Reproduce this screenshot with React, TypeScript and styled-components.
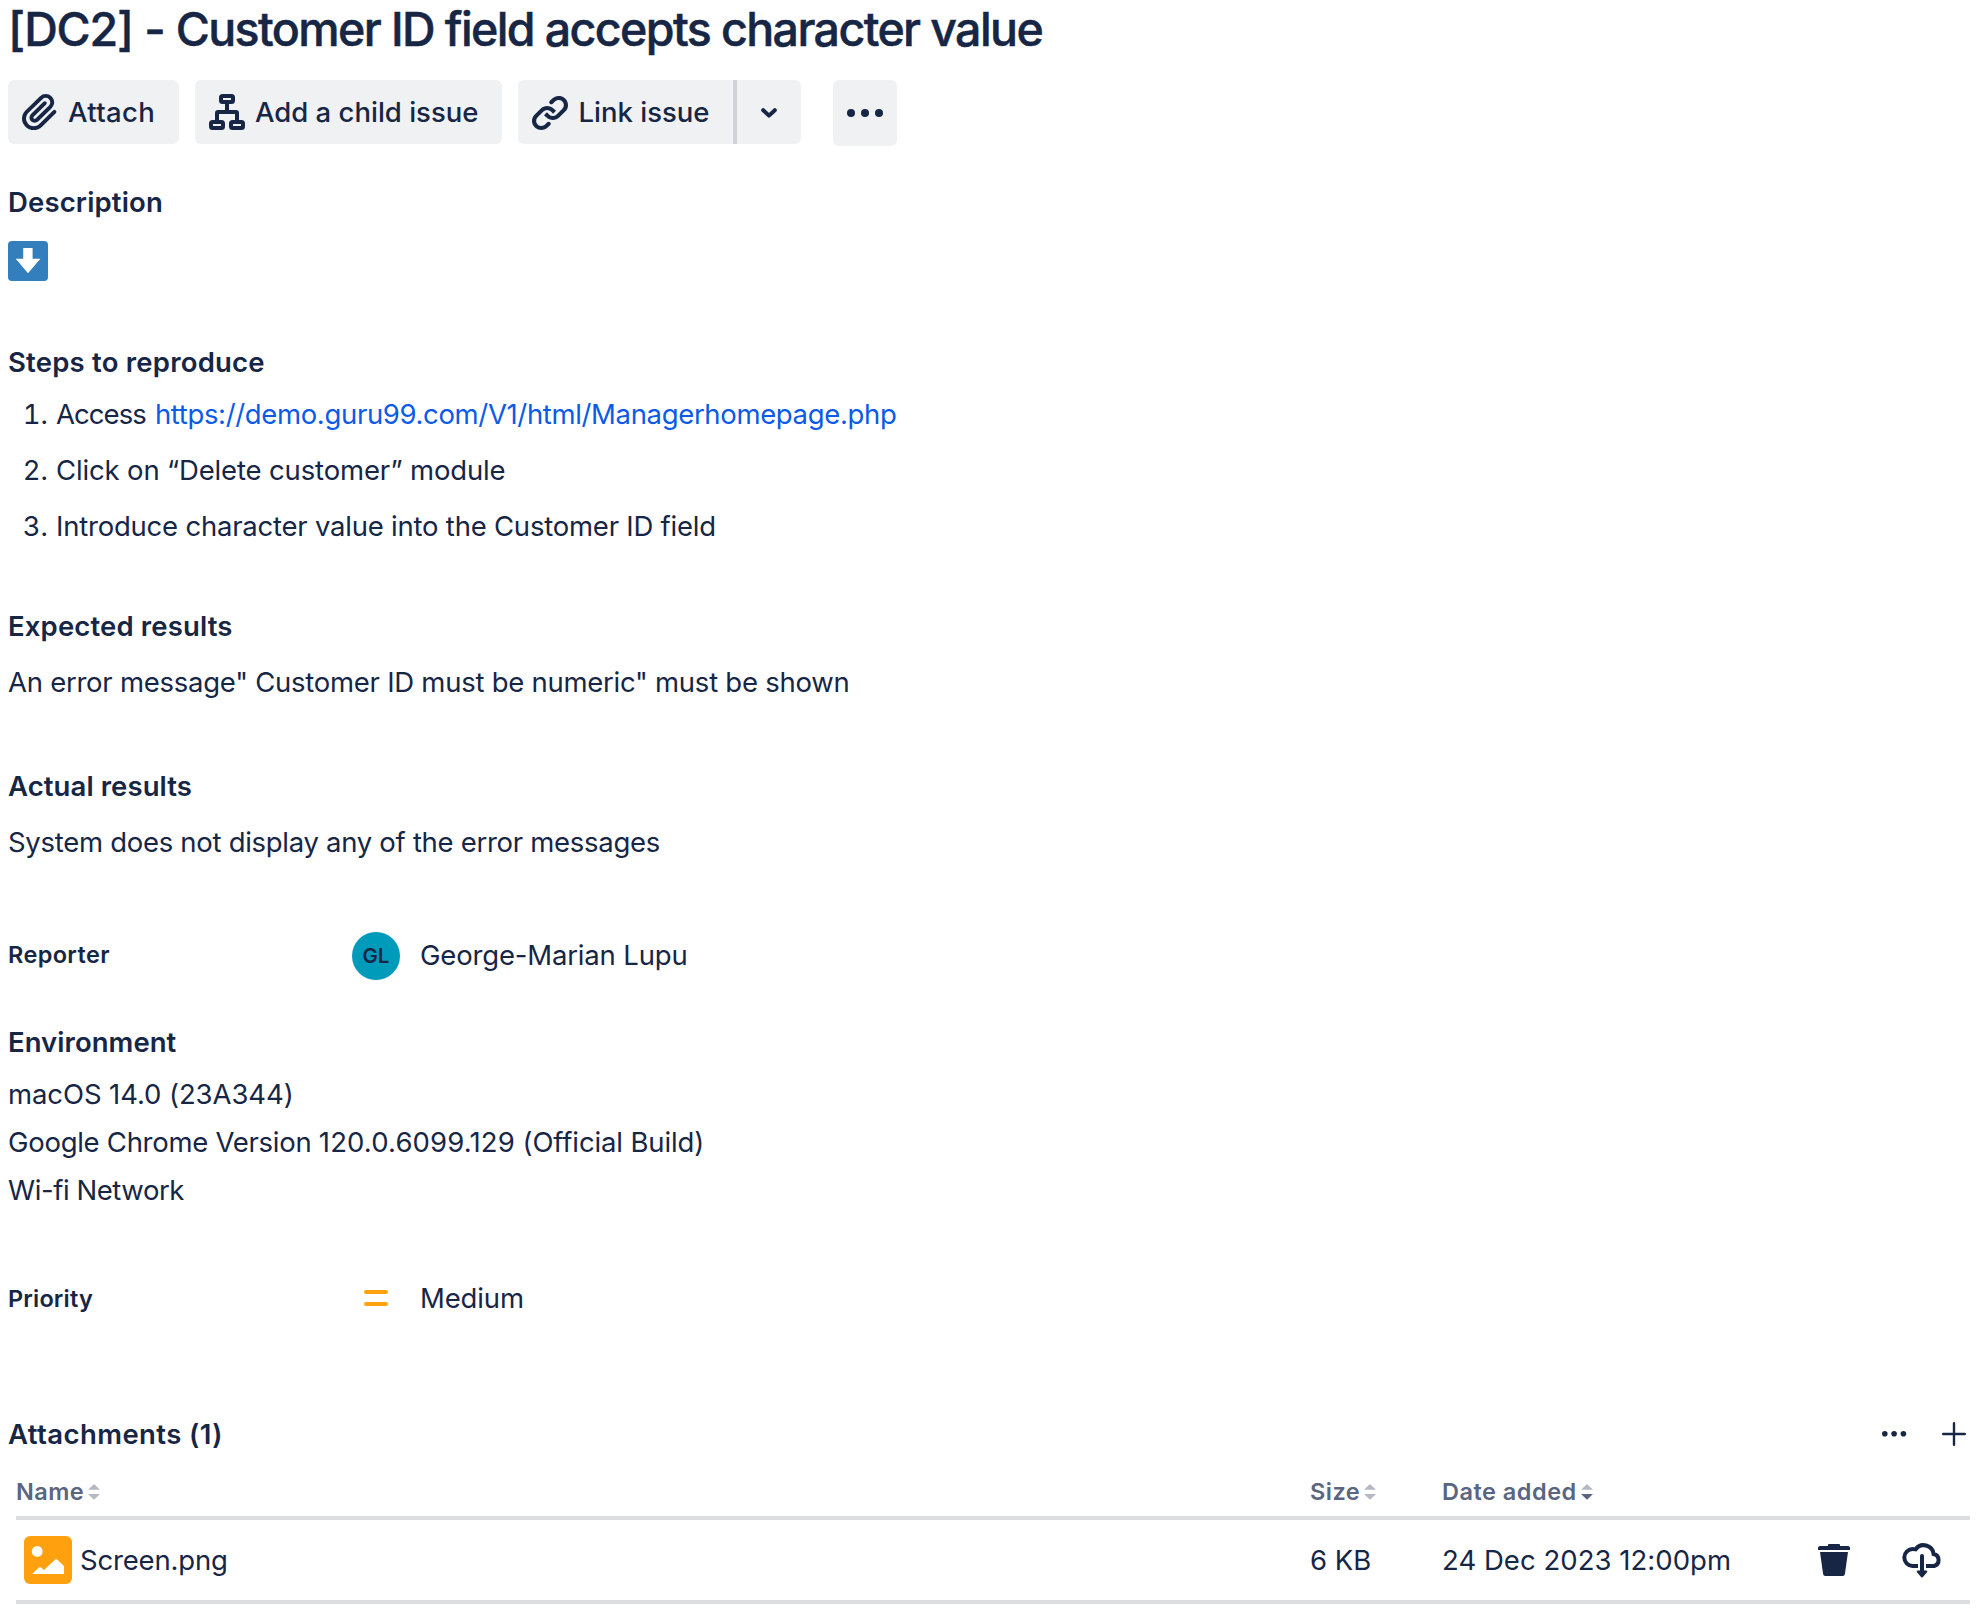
import React from 'react';
import styled, { createGlobalStyle } from 'styled-components';

const color = {
  text: '#172645',
  subtle: '#5a6580',
  link: '#0c5ae8',
  button: '#f0f1f3',
  divider: '#d0d1d9',
  rule: '#dddee3',
  orange: '#ffa00f',
  faint: '#b4b9c4',
};

const GlobalStyle = createGlobalStyle`
  *, *::before, *::after { box-sizing: border-box; }
  body {
    margin: 0;
    background: #fff;
    color: ${color.text};
    font-family: Inter, 'Liberation Sans', sans-serif;
    font-size: 27.5px;
    line-height: 40px;
  }
  svg { display: block; flex: none; overflow: visible; }
`;

interface Spaced {
  $ls?: number;
}

const Page = styled.main`
  display: flex;
  flex-direction: column;
  width: 1988px;
  height: 1616px;
  padding: 1px 18px 0 8px;
  overflow: hidden;
  white-space: nowrap;
`;

const Title = styled.h1`
  margin: 0;
  font-size: 46.5px;
  line-height: 56px;
  font-weight: 500;
  -webkit-text-stroke: 0.5px currentColor;
`;

const Toolbar = styled.div`
  display: flex;
  align-items: flex-start;
  gap: 16px;
  margin-top: 23px;
  height: 66px;
`;

const Button = styled.button<{ $width: number; $gap?: number; $joined?: boolean } & Spaced>`
  display: flex;
  align-items: center;
  gap: ${(p) => p.$gap ?? 4}px;
  width: ${(p) => p.$width}px;
  height: 64px;
  padding: 0 0 0 8px;
  border: 0;
  border-radius: ${(p) => (p.$joined ? '6px 0 0 6px' : '6px')};
  background: ${color.button};
  color: inherit;
  font: inherit;
  font-weight: 500;
  letter-spacing: ${(p) => p.$ls ?? 0}px;
`;

const SplitButton = styled.div`
  display: flex;
`;

const Caret = styled.button`
  display: flex;
  align-items: center;
  justify-content: center;
  width: 68px;
  height: 64px;
  padding: 2px 0 0;
  border: 0;
  border-left: 4px solid ${color.divider};
  border-radius: 0 6px 6px 0;
  background: ${color.button};
  color: inherit;
`;

const MoreButton = styled.button`
  display: flex;
  align-items: center;
  justify-content: center;
  width: 64px;
  height: 66px;
  margin-left: 16px;
  padding: 0;
  border: 0;
  border-radius: 6px;
  background: ${color.button};
  color: inherit;
`;

const Section = styled.section<{ $top: number }>`
  display: flex;
  flex-direction: column;
  margin-top: ${(p) => p.$top}px;
`;

const Heading = styled.h2<Spaced>`
  margin: 0;
  font-size: 27.5px;
  line-height: 40px;
  font-weight: 600;
  letter-spacing: ${(p) => p.$ls ?? 0}px;
`;

const EmojiRow = styled.div`
  margin-top: 19px;
`;

const Steps = styled.ol`
  display: flex;
  flex-direction: column;
  gap: 16px;
  margin: 12px 0 0;
  padding: 0;
  list-style: none;
`;

const Step = styled.li`
  display: flex;
  gap: 8px;
`;

const Marker = styled.span`
  width: 40px;
  text-align: right;
  font-variant-numeric: tabular-nums;
`;

const Text = styled.span<Spaced>`
  letter-spacing: ${(p) => p.$ls ?? 0}px;
`;

const Link = styled.a`
  margin-left: 9px;
  color: ${color.link};
  text-decoration: none;
  letter-spacing: -0.346px;
`;

const Paragraph = styled.p<Spaced>`
  margin: 16px 0 0;
  letter-spacing: ${(p) => p.$ls ?? 0}px;
`;

const Lines = styled.div`
  display: flex;
  flex-direction: column;
  margin-top: 8px;
  line-height: 48px;
`;

const FieldRow = styled.div<{ $top: number }>`
  display: grid;
  grid-template-columns: 344px 68px auto;
  align-items: center;
  height: 48px;
  margin-top: ${(p) => p.$top}px;
`;

const FieldLabel = styled.span<{ $lift?: number } & Spaced>`
  padding-bottom: ${(p) => p.$lift ?? 0}px;
  font-size: 23.5px;
  line-height: 33px;
  font-weight: 600;
  letter-spacing: ${(p) => p.$ls ?? 0}px;
`;

const FieldValue = styled.span<{ $lift?: number } & Spaced>`
  padding-bottom: ${(p) => p.$lift ?? 0}px;
  letter-spacing: ${(p) => p.$ls ?? 0}px;
`;

const Avatar = styled.span`
  display: flex;
  align-items: center;
  justify-content: center;
  width: 48px;
  height: 48px;
  border-radius: 50%;
  background: #009abb;
  font-size: 20.5px;
  line-height: 24px;
  font-weight: 600;
`;

const PriorityIcon = styled.span`
  display: flex;
  flex-direction: column;
  justify-content: space-between;
  width: 24px;
  height: 16px;
  margin-left: 12px;

  &::before,
  &::after {
    content: '';
    height: 4px;
    border-radius: 2px;
    background: ${color.orange};
  }
`;

const AttachmentsBar = styled.div`
  display: flex;
  align-items: center;
  justify-content: space-between;
  height: 40px;
`;

const BarActions = styled.div`
  display: flex;
  align-items: center;
  gap: 36px;
  margin-right: 4px;
`;

const TableRow = styled.div<{ $height: number; $head?: boolean }>`
  display: grid;
  grid-template-columns: 1294px 132px 376px 84px auto;
  align-items: center;
  height: ${(p) => p.$height}px;
  margin-left: 8px;
  padding-top: ${(p) => (p.$head ? 14 : 0)}px;
  border-bottom: 4px solid ${color.rule};
`;

const ColumnHead = styled.div<Spaced>`
  display: flex;
  align-items: center;
  gap: 4px;
  color: ${color.subtle};
  font-size: 23.5px;
  line-height: 32px;
  font-weight: 600;
  letter-spacing: ${(p) => p.$ls ?? 0}px;
`;

const FileCell = styled.div`
  display: flex;
  align-items: center;
  gap: 8px;
  padding-left: 8px;
`;

const AttachIcon = () => (
  <svg width="48" height="48" viewBox="0 0 24 24" fill="currentColor">
    <path d="M11.643 17.965c-1.53 1.495-4.016 1.496-5.542.004a3.773 3.773 0 01.002-5.412l7.147-6.985a2.316 2.316 0 013.233-.003c.893.873.895 2.282.004 3.153l-6.703 6.55a.653.653 0 01-.914-.008.62.62 0 010-.902l6.229-6.087a.941.941 0 000-1.353.995.995 0 00-1.384 0l-6.23 6.087a2.502 2.502 0 00.001 3.607 2.643 2.643 0 003.683.009l6.703-6.55a4.074 4.074 0 00-.003-5.859 4.306 4.306 0 00-6.002.003l-7.148 6.985a5.655 5.655 0 00-.001 8.118c2.29 2.237 6.015 2.238 8.308-.004l6.862-6.705a.941.941 0 000-1.353.995.995 0 00-1.384 0l-6.861 6.705z" />
  </svg>
);

const ChildIssuesIcon = () => (
  <svg width="48" height="48" viewBox="0 0 48 48" fill="none" stroke="currentColor" strokeWidth="4">
    <rect x="18" y="8" width="12" height="6" rx="1.5" />
    <path d="M24 15v9M14 33v-8a1 1 0 011-1h18a1 1 0 011 1v8" />
    <rect x="8" y="34" width="12" height="6" rx="1.5" />
    <rect x="28" y="34" width="12" height="6" rx="1.5" />
  </svg>
);

const LinkIcon = () => (
  <svg width="48" height="48" viewBox="0 0 24 24" fill="currentColor">
    <path d="M12.856 5.457l-.937.92a1.002 1.002 0 000 1.437 1.047 1.047 0 001.463 0l.984-.966c.967-.95 2.542-1.135 3.602-.288a2.54 2.54 0 01.203 3.81l-2.903 2.852a2.646 2.646 0 01-3.696 0l-1.11-1.09L9 13.57l1.108 1.089c1.822 1.788 4.802 1.788 6.622 0l2.905-2.852a4.558 4.558 0 00-.357-6.82c-1.893-1.517-4.695-1.226-6.422.47" />
    <path d="M11.144 19.543l.937-.92a1.002 1.002 0 000-1.437 1.047 1.047 0 00-1.462 0l-.985.966c-.967.95-2.542 1.135-3.602.288a2.54 2.54 0 01-.203-3.81l2.903-2.852a2.646 2.646 0 013.696 0l1.11 1.09L15 11.43l-1.108-1.089c-1.822-1.788-4.802-1.788-6.622 0l-2.905 2.852a4.558 4.558 0 00.357 6.82c1.893 1.517 4.695 1.226 6.422-.47" />
  </svg>
);

const ChevronIcon = () => (
  <svg width="16" height="10" viewBox="0 0 16 10" fill="none" stroke="currentColor" strokeWidth="4" strokeLinecap="round" strokeLinejoin="round">
    <path d="M2.2 2.2L8 7.6l5.8-5.4" />
  </svg>
);

const DotsIcon = ({ r, step }: { r: number; step: number }) => {
  const width = step * 2 + r * 2;
  return (
    <svg width={width} height={r * 2} fill="currentColor">
      {[0, 1, 2].map((i) => (
        <circle key={i} cx={r + i * step} cy={r} r={r} />
      ))}
    </svg>
  );
};

const PlusIcon = () => (
  <svg width="24" height="24" viewBox="0 0 24 24" fill="none" stroke="currentColor" strokeWidth="2.4" strokeLinecap="round">
    <path d="M12 1.2v21.6M1.2 12h21.6" />
  </svg>
);

const DownArrowEmoji = () => (
  <svg width="40" height="40" viewBox="0 0 40 40">
    <rect width="40" height="40" rx="4" fill="#337fbd" />
    <path d="M15.2 7h9.4v10.8h7.8L20 32.3 7.7 17.8h7.5z" fill="#fff" />
  </svg>
);

const SortIcon = ({ sorted }: { sorted?: boolean }) => (
  <svg width="12" height="18" viewBox="0 0 12 18">
    <path d="M0 6.7L6 1l6 5.7z" fill={color.faint} />
    <path d="M0 11l6 5.700L12 11z" fill={sorted ? color.subtle : color.faint} />
  </svg>
);

const ImageFileIcon = () => (
  <svg width="48" height="48" viewBox="0 0 48 48">
    <rect width="48" height="48" rx="6" fill={color.orange} />
    <circle cx="13.2" cy="15.4" r="5.4" fill="#fff" />
    <path d="M8 38l7-6.6q1-.9 2 0l3 2.6 11-10.3q1.2-1.2 2.4 0L40 30v8z" fill="#fff" />
  </svg>
);

const TrashIcon = () => (
  <svg width="32" height="32" viewBox="0 0 32 32" fill="currentColor">
    <path d="M11 0h10q1 0 1 1v1h8q2 0 2 2v2H0V4q0-2 2-2h8V1q0-1 1-1zM2 8h28l-3.1 22q-.3 2-2.1 2H7.2q-1.8 0-2.1-2z" />
  </svg>
);

const CloudDownloadIcon = () => (
  <svg width="40" height="36" viewBox="0 0 40 36" fill="none" stroke="currentColor" strokeWidth="4">
    <path d="M16 24h-5.4A8.5 8.5 0 0111 7q1.4 0 2.6.3A10 10 0 0131.6 12 6.2 6.2 0 0132.2 24H24" />
    <path d="M20 14v16" strokeLinecap="round" />
    <path d="M15.5 28.5h9q1.3.6.5 1.7l-4 4.9q-1 1-2 0l-4-4.9q-.8-1.1.5-1.7z" fill="currentColor" stroke="none" />
  </svg>
);

export default function App() {
  return (
    <>
      <GlobalStyle />
      <Page>
        <Title>
          <Text $ls={-1.18}>[DC2] - </Text>
          <Text $ls={-1.6}>Customer ID field accepts character value</Text>
        </Title>

        <Toolbar>
          <Button $width={171} $ls={0.36}>
            <AttachIcon />
            Attach
          </Button>
          <Button $width={307}>
            <ChildIssuesIcon />
            Add a child issue
          </Button>
          <SplitButton>
            <Button $width={215} $gap={4.5} $joined>
              <LinkIcon />
              Link issue
            </Button>
            <Caret>
              <ChevronIcon />
            </Caret>
          </SplitButton>
          <MoreButton>
            <DotsIcon r={4} step={14} />
          </MoreButton>
        </Toolbar>

        <Section $top={36}>
          <Heading $ls={0.15}>Description</Heading>
          <EmojiRow>
            <DownArrowEmoji />
          </EmojiRow>
        </Section>

        <Section $top={61}>
          <Heading $ls={0.21}>Steps to reproduce</Heading>
          <Steps>
            <Step>
              <Marker>1.</Marker>
              <div>
                <Text $ls={-0.93}>Access</Text>
                <Link>https://demo.guru99.com/V1/html/Managerhomepage.php</Link>
              </div>
            </Step>
            <Step>
              <Marker>2.</Marker>
              <Text $ls={-0.15}>Click on “Delete customer” module</Text>
            </Step>
            <Step>
              <Marker>3.</Marker>
              <Text $ls={-0.22}>Introduce character value into the Customer ID field</Text>
            </Step>
          </Steps>
        </Section>

        <Section $top={60}>
          <Heading $ls={0.15}>Expected results</Heading>
          <Paragraph $ls={-0.26}>An error message" Customer ID must be numeric" must be shown</Paragraph>
        </Section>

        <Section $top={64}>
          <Heading $ls={0.09}>Actual results</Heading>
          <Paragraph $ls={-0.29}>System does not display any of the error messages</Paragraph>
        </Section>

        <FieldRow $top={70}>
          <FieldLabel $ls={0.36} $lift={3}>Reporter</FieldLabel>
          <Avatar>GL</Avatar>
          <FieldValue $ls={-0.17} $lift={2}>George-Marian Lupu</FieldValue>
        </FieldRow>

        <Section $top={42}>
          <Heading $ls={0.05}>Environment</Heading>
          <Lines>
            <Text $ls={-0.09}>macOS 14.0 (23A344)</Text>
            <div>
              <Text $ls={-0.28}>Google Chrome Version </Text>
              <Text $ls={0.14}>120.0.6099.129</Text>
              <Text $ls={-0.12}> (Official Build)</Text>
            </div>
            <Text $ls={-0.42}>Wi-fi Network</Text>
          </Lines>
        </Section>

        <FieldRow $top={60}>
          <FieldLabel $ls={0.17}>Priority</FieldLabel>
          <PriorityIcon />
          <FieldValue $ls={-0.15}>Medium</FieldValue>
        </FieldRow>

        <Section $top={92}>
          <AttachmentsBar>
            <Heading $ls={0.42}>Attachments (1)</Heading>
            <BarActions>
              <DotsIcon r={2.8} step={9.3} />
              <PlusIcon />
            </BarActions>
          </AttachmentsBar>

          <TableRow $height={66} $head>
            <ColumnHead $ls={0.4}>
              Name
              <SortIcon />
            </ColumnHead>
            <ColumnHead $ls={0.5}>
              Size
              <SortIcon />
            </ColumnHead>
            <ColumnHead $ls={0.5}>
              Date added
              <SortIcon sorted />
            </ColumnHead>
          </TableRow>
          <TableRow $height={84}>
            <FileCell>
              <ImageFileIcon />
              <Text $ls={-0.17}>Screen.png</Text>
            </FileCell>
            <Text>6 KB</Text>
            <Text $ls={0.04}>24 Dec 2023 12:00pm</Text>
            <TrashIcon />
            <CloudDownloadIcon />
          </TableRow>
        </Section>
      </Page>
    </>
  );
}
